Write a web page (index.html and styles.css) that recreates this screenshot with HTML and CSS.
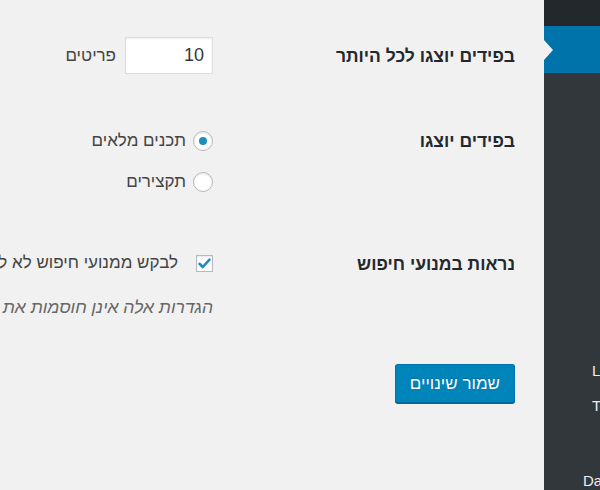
FILE: index.html
```html
<!DOCTYPE html>
<html dir="rtl" lang="he">

<head>
    <meta charset="utf-8">
    <title>הגדרות קריאה</title>
    <link rel="stylesheet" href="styles.css">
</head>

<body>
    <div class="wrap">
        <aside class="sidebar">
            <div class="topbar"></div>
            <div class="current"></div>
            <ul class="menu">
                <li class="item-l">Links</li>
                <li class="item-t">Tools</li>
                <li class="item-da">Dashboard</li>
            </ul>
        </aside>

        <main class="content">
            <form>
                <div class="row row-posts">
                    <div class="label">בפידים יוצגו לכל היותר</div>
                    <div class="field field-inline">
                        <input type="text" class="small-text" value="10">
                        <span>פריטים</span>
                    </div>
                </div>

                <div class="row row-feed">
                    <div class="label">בפידים יוצגו</div>
                    <div class="field options">
                        <div class="option"><span class="radio checked"></span><span>תכנים מלאים</span></div>
                        <div class="option"><span class="radio"></span><span>תקצירים</span></div>
                    </div>
                </div>

                <div class="row row-search">
                    <div class="label">נראות במנועי חיפוש</div>
                    <div class="field">
                        <div class="option check-option">
                            <span class="checkbox">
                                <svg width="15" height="15" viewBox="0 0 15 15">
                                    <path d="M2.5 7.8 L5.8 11 L12.5 3.6" fill="none" stroke="#1e8cbe" stroke-width="2.6" stroke-linecap="round" stroke-linejoin="round"/>
                                </svg>
                            </span>
                            <span>לבקש ממנועי חיפוש לא לאנדקס את האתר</span>
                        </div>
                        <p class="description">הגדרות אלה אינן חוסמות את האתר לחלוטין, וההחלטה אם לכבד את הבקשה נתונה בידי מנועי החיפוש.</p>
                    </div>
                </div>

                <p class="submit">
                    <button type="button" class="button-primary">שמור שינויים</button>
                </p>
            </form>
        </main>
    </div>
</body>

</html>
```

FILE: styles.css
```css
html,
body {
    margin: 0;
    padding: 0;
}

body {
    font-family: "Liberation Sans", Arial, sans-serif;
    font-size: 17px;
    color: #444;
    background-color: #f1f1f1;
    overflow: hidden;
}

.wrap {
    display: flex;
    height: 490px;
}

/* admin menu, only its edge is in view */
.sidebar {
    width: 56px;
    flex: none;
    background-color: #32373c;
    overflow: hidden;
}

.topbar {
    height: 26px;
    background-color: #23282d;
}

.current {
    position: relative;
    height: 47px;
    background-color: #0073aa;
}

.current::after {
    content: "";
    position: absolute;
    left: 0;
    top: 50%;
    margin-top: -10px;
    border-style: solid;
    border-width: 10px 0 10px 9px;
    border-color: transparent transparent transparent #f1f1f1;
}

.menu {
    list-style: none;
    margin: 0;
    padding: 288px 0 0;
    direction: ltr;
    text-align: left;
    white-space: nowrap;
    color: #eee;
    font-size: 15px;
    line-height: 20px;
}

.menu li {
    padding-left: 48px;
}

.menu .item-t {
    margin-top: 15px;
}

.menu .item-da {
    margin-top: 55px;
    padding-left: 39px;
}

/* settings form */
.content {
    flex: 1;
    min-width: 0;
    overflow: hidden;
    padding: 37px 29px 0 0;
}

.row {
    display: grid;
    grid-template-columns: 302px 1fr;
    align-items: start;
}

.label {
    font-size: 17.5px;
    font-weight: bold;
    color: #23282d;
    line-height: 20px;
    white-space: nowrap;
}

.field {
    white-space: nowrap;
    min-width: 0;
}

.row-posts {
    align-items: center;
}

.field-inline {
    display: flex;
    align-items: center;
    gap: 9px;
}

.small-text {
    width: 88px;
    height: 37px;
    box-sizing: border-box;
    margin: 0;
    padding: 0 8px;
    border: 1px solid #ddd;
    background-color: #fff;
    box-shadow: inset 0 1px 2px rgba(0, 0, 0, 0.07);
    font: inherit;
    font-size: 18px;
    color: #32373c;
    text-align: right;
    outline: none;
}

.row-feed {
    margin-top: 57px;
}

.options {
    display: flex;
    flex-direction: column;
    gap: 21px;
}

.option {
    display: flex;
    align-items: center;
    gap: 7px;
    line-height: 20px;
}

.radio {
    width: 20px;
    height: 20px;
    box-sizing: border-box;
    flex: none;
    border: 1px solid #b4b9be;
    border-radius: 50%;
    background-color: #fff;
    box-shadow: inset 0 1px 2px rgba(0, 0, 0, 0.1);
    display: flex;
    align-items: center;
    justify-content: center;
}

.radio.checked::before {
    content: "";
    width: 8px;
    height: 8px;
    border-radius: 50%;
    background-color: #1e8cbe;
}

.row-search {
    margin-top: 61px;
}

.row-search .label {
    margin-top: 1px;
}

.check-option {
    gap: 18px;
}

.checkbox {
    width: 17px;
    height: 17px;
    box-sizing: border-box;
    flex: none;
    border: 1px solid #b4b9be;
    background-color: #fff;
    box-shadow: inset 0 1px 2px rgba(0, 0, 0, 0.1);
    display: flex;
    align-items: center;
    justify-content: center;
}

.description {
    margin: 24px 0 0;
    font-size: 17.5px;
    line-height: 20px;
    font-style: italic;
    color: #666;
}

.submit {
    margin: 47px 0 0;
}

.button-primary {
    height: 39px;
    padding: 0 14px;
    border: 1px solid #0073aa;
    border-bottom-color: #006799;
    border-radius: 3px;
    background-color: #0085ba;
    box-shadow: 0 1px 0 #006799;
    color: #fff;
    font-family: inherit;
    font-size: 17px;
    text-shadow: 0 -1px 1px #006799;
    cursor: pointer;
}
```
